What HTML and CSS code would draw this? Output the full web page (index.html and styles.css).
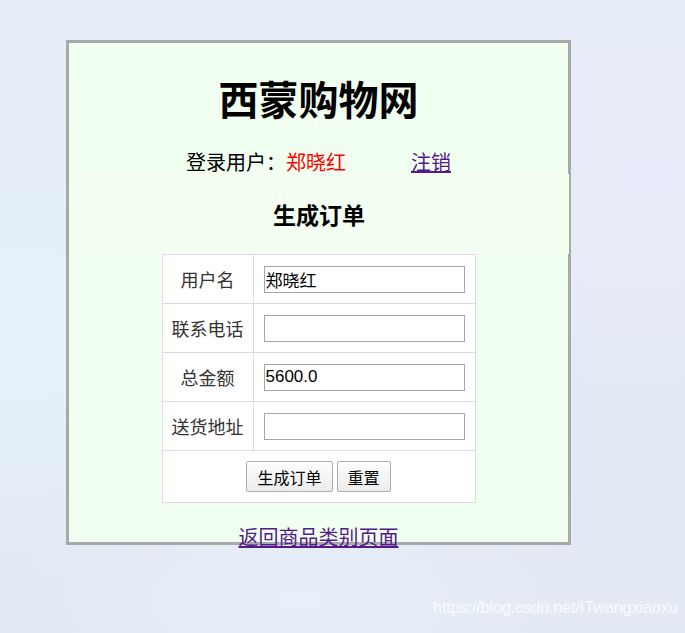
FILE: index.html
```html
<!DOCTYPE html>
<html lang="zh">
<head>
<meta charset="utf-8">
<title>西蒙购物网 - 生成订单</title>
<link rel="stylesheet" href="styles.css">
</head>
<body>
<div class="frame">
  <h1 class="title">西蒙购物网</h1>
  <div class="login">登录用户：<span class="user">郑晓红</span><a class="logout" href="#">注销</a></div>
  <div class="section">
    <h2 class="heading">生成订单</h2>
  </div>
  <form class="order">
    <table class="grid">
      <tr><td class="label">用户名</td><td class="field"><input class="text" type="text" value="郑晓红"></td></tr>
      <tr><td class="label">联系电话</td><td class="field"><input class="text" type="text" value=""></td></tr>
      <tr><td class="label">总金额</td><td class="field"><input class="text" type="text" value="5600.0"></td></tr>
      <tr><td class="label">送货地址</td><td class="field"><input class="text" type="text" value=""></td></tr>
      <tr class="actions"><td colspan="2"><button class="btn" type="button">生成订单</button><button class="btn" type="button">重置</button></td></tr>
    </table>
  </form>
  <div class="back"><a href="#">返回商品类别页面</a></div>
</div>
<div class="watermark">https://blog.csdn.net/ITwangxiaoxu</div>
</body>
</html>
```
FILE: styles.css
```css
html, body {
  margin: 0;
  padding: 0;
}
body {
  width: 685px;
  height: 633px;
  position: relative;
  overflow: hidden;
  font-family: "Noto Sans CJK SC", "Liberation Sans", sans-serif;
  background:
    radial-gradient(ellipse 260px 260px at 20px 330px, rgba(230,243,252,0.95), rgba(230,243,252,0)),
    radial-gradient(ellipse 300px 240px at 650px 180px, rgba(233,236,250,0.9), rgba(233,236,250,0)),
    radial-gradient(ellipse 300px 120px at 300px 600px, rgba(232,240,250,0.9), rgba(232,240,250,0)),
    linear-gradient(180deg, #e6edf7 0%, #e3eaf5 50%, #e2e9f4 100%);
  padding-top: 40px;
  box-sizing: border-box;
}
.frame {
  margin-left: 66px;
  width: 499px;
  height: 499px;
  border: 3px solid #a9a9a9;
  background: #f0fff0;
  text-align: center;
}
.title {
  margin: 0;
  padding-top: 27px;
  font-size: 40px;
  line-height: 56px;
  font-weight: 700;
  color: #000;
  margin-bottom: 24px;
}
.login {
  font-size: 20px;
  line-height: 24px;
  height: 24px;
  color: #000;
}
.user {
  color: #ff0000;
}
.logout {
  color: #551a8b;
  margin-left: 65px;
}
.section {
  width: 500px;
  height: 80px;
  box-sizing: border-box;
  padding-top: 23px;
  background: #f2fff1;
  border-top: 1px solid #fbf9ee;
  border-bottom: 1px solid #fbfbf0;
}
.heading {
  margin: 0;
  font-size: 23px;
  line-height: 32px;
  font-weight: 700;
  color: #000;
}
.order {
  margin: 0;
}
.grid {
  margin: 0 auto;
  border-collapse: collapse;
  background: #fff;
  width: 314px;
}
.grid td {
  border: 1px solid #dcdcdc;
  padding: 0;
  height: 48px;
}
.label {
  width: 90px;
  font-size: 18px;
  color: #333;
  text-align: center;
}
.grid .field {
  text-align: left;
  padding-left: 10px;
}
.text {
  display: block;
  margin: 0;
  width: 201px;
  height: 27px;
  box-sizing: border-box;
  border: 1px solid #a6a6a6;
  padding: 0 1px;
  font-family: "Liberation Sans", "Noto Sans CJK SC", sans-serif;
  font-size: 17px;
  color: #000;
  background: #fff;
}
.actions td {
  height: 51px;
  text-align: center;
}
.btn {
  height: 31px;
  margin: 0 2px;
  padding: 0 10px;
  border: 1px solid #adadad;
  border-radius: 2px;
  background: linear-gradient(180deg, #fdfdfd 0%, #ececec 100%);
  font-family: "Noto Sans CJK SC", "Liberation Sans", sans-serif;
  font-size: 16px;
  color: #000;
  vertical-align: middle;
}
.back {
  margin-top: 22px;
  font-size: 20px;
  line-height: 24px;
}
.back a {
  color: #551a8b;
}
.watermark {
  position: absolute;
  left: 433px;
  top: 598px;
  font-family: "Liberation Sans", sans-serif;
  font-size: 16.4px;
  color: rgba(255,255,255,0.8);
  letter-spacing: -0.2px;
}
```
